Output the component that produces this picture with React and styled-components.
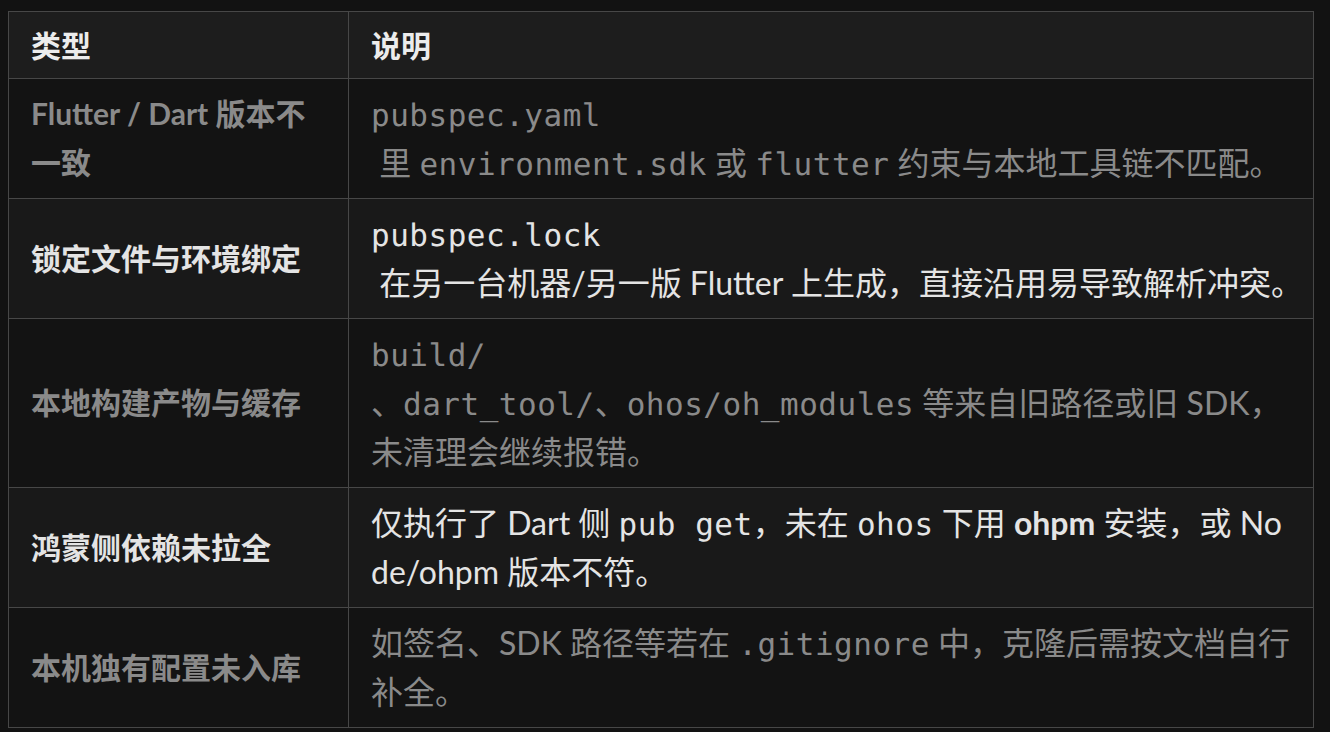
import React from 'react';
import styled, { createGlobalStyle } from 'styled-components';

const GlobalStyle = createGlobalStyle`
  body {
    margin: 0;
    background: #121212;
    font-family: Lato, "Noto Sans CJK SC", sans-serif;
  }
`;

const Page = styled.div`
  padding: 11px 0 0 8px;
`;

const Table = styled.table`
  width: 1305px;
  table-layout: fixed;
  border-collapse: collapse;
  font-size: 32px;
  line-height: 49px;
`;

const Th = styled.th`
  background: #1d1d1d;
  border: 1px solid #474747;
  padding: 9px 22px 8px;
  text-align: left;
  font-weight: 700;
  font-size: 30px;
  color: #ececec;
`;

const Row = styled.tr`
  background: ${(p) => (p.$bright ? '#191919' : '#131313')};
  color: ${(p) => (p.$bright ? '#e4e4e4' : '#8a8a8a')};
`;

const TypeCell = styled.td`
  border: 1px solid #474747;
  padding: 10px 22px 11px;
  vertical-align: middle;
  font-weight: 700;
  font-size: 30px;
`;

const DescCell = styled.td`
  border: 1px solid #474747;
  padding: 10px 22px 11px;
  vertical-align: middle;
  white-space: nowrap;

  b {
    font-weight: 700;
  }
`;

const Code = styled.code`
  display: inline-block;
  font-family: "DejaVu Sans Mono", "Noto Sans CJK SC", monospace;
  font-size: 31px;
  line-height: 36px;
  letter-spacing: 0.5px;
  text-rendering: geometricPrecision;
`;

const rows = [
  {
    type: 'Flutter / Dart 版本不一致',
    desc: (
      <>
        <Code>pubspec.yaml</Code>
        <br />
        {'\u00a0'}里 <Code>environment.sdk</Code> 或 <Code>flutter</Code> 约束与本地工具链不匹配。
      </>
    ),
  },
  {
    type: '锁定文件与环境绑定',
    desc: (
      <>
        <Code>pubspec.lock</Code>
        <br />
        {'\u00a0'}在另一台机器/另一版 Flutter 上生成，直接沿用易导致解析冲突。
      </>
    ),
  },
  {
    type: '本地构建产物与缓存',
    desc: (
      <>
        <Code>build/</Code>
        <br />
        、<Code>dart_tool/</Code>、<Code>ohos/oh_modules</Code> 等来自旧路径或旧 SDK，
        <br />
        未清理会继续报错。
      </>
    ),
  },
  {
    type: '鸿蒙侧依赖未拉全',
    desc: (
      <>
        仅执行了 Dart 侧 <Code>pub get</Code>，未在 <Code>ohos</Code> 下用 <b>ohpm</b> 安装，或 No
        <br />
        de/ohpm 版本不符。
      </>
    ),
  },
  {
    type: '本机独有配置未入库',
    desc: (
      <>
        如签名、SDK 路径等若在 <Code>.gitignore</Code> 中，克隆后需按文档自行
        <br />
        补全。
      </>
    ),
  },
];

function App() {
  return (
    <Page>
      <GlobalStyle />
      <Table>
        <colgroup>
          <col style={{ width: 340 }} />
          <col style={{ width: 965 }} />
        </colgroup>
        <thead>
          <tr>
            <Th>类型</Th>
            <Th>说明</Th>
          </tr>
        </thead>
        <tbody>
          {rows.map((row, i) => (
            <Row key={i} $bright={i % 2 === 1}>
              <TypeCell>{row.type}</TypeCell>
              <DescCell>{row.desc}</DescCell>
            </Row>
          ))}
        </tbody>
      </Table>
    </Page>
  );
}

export default App;
